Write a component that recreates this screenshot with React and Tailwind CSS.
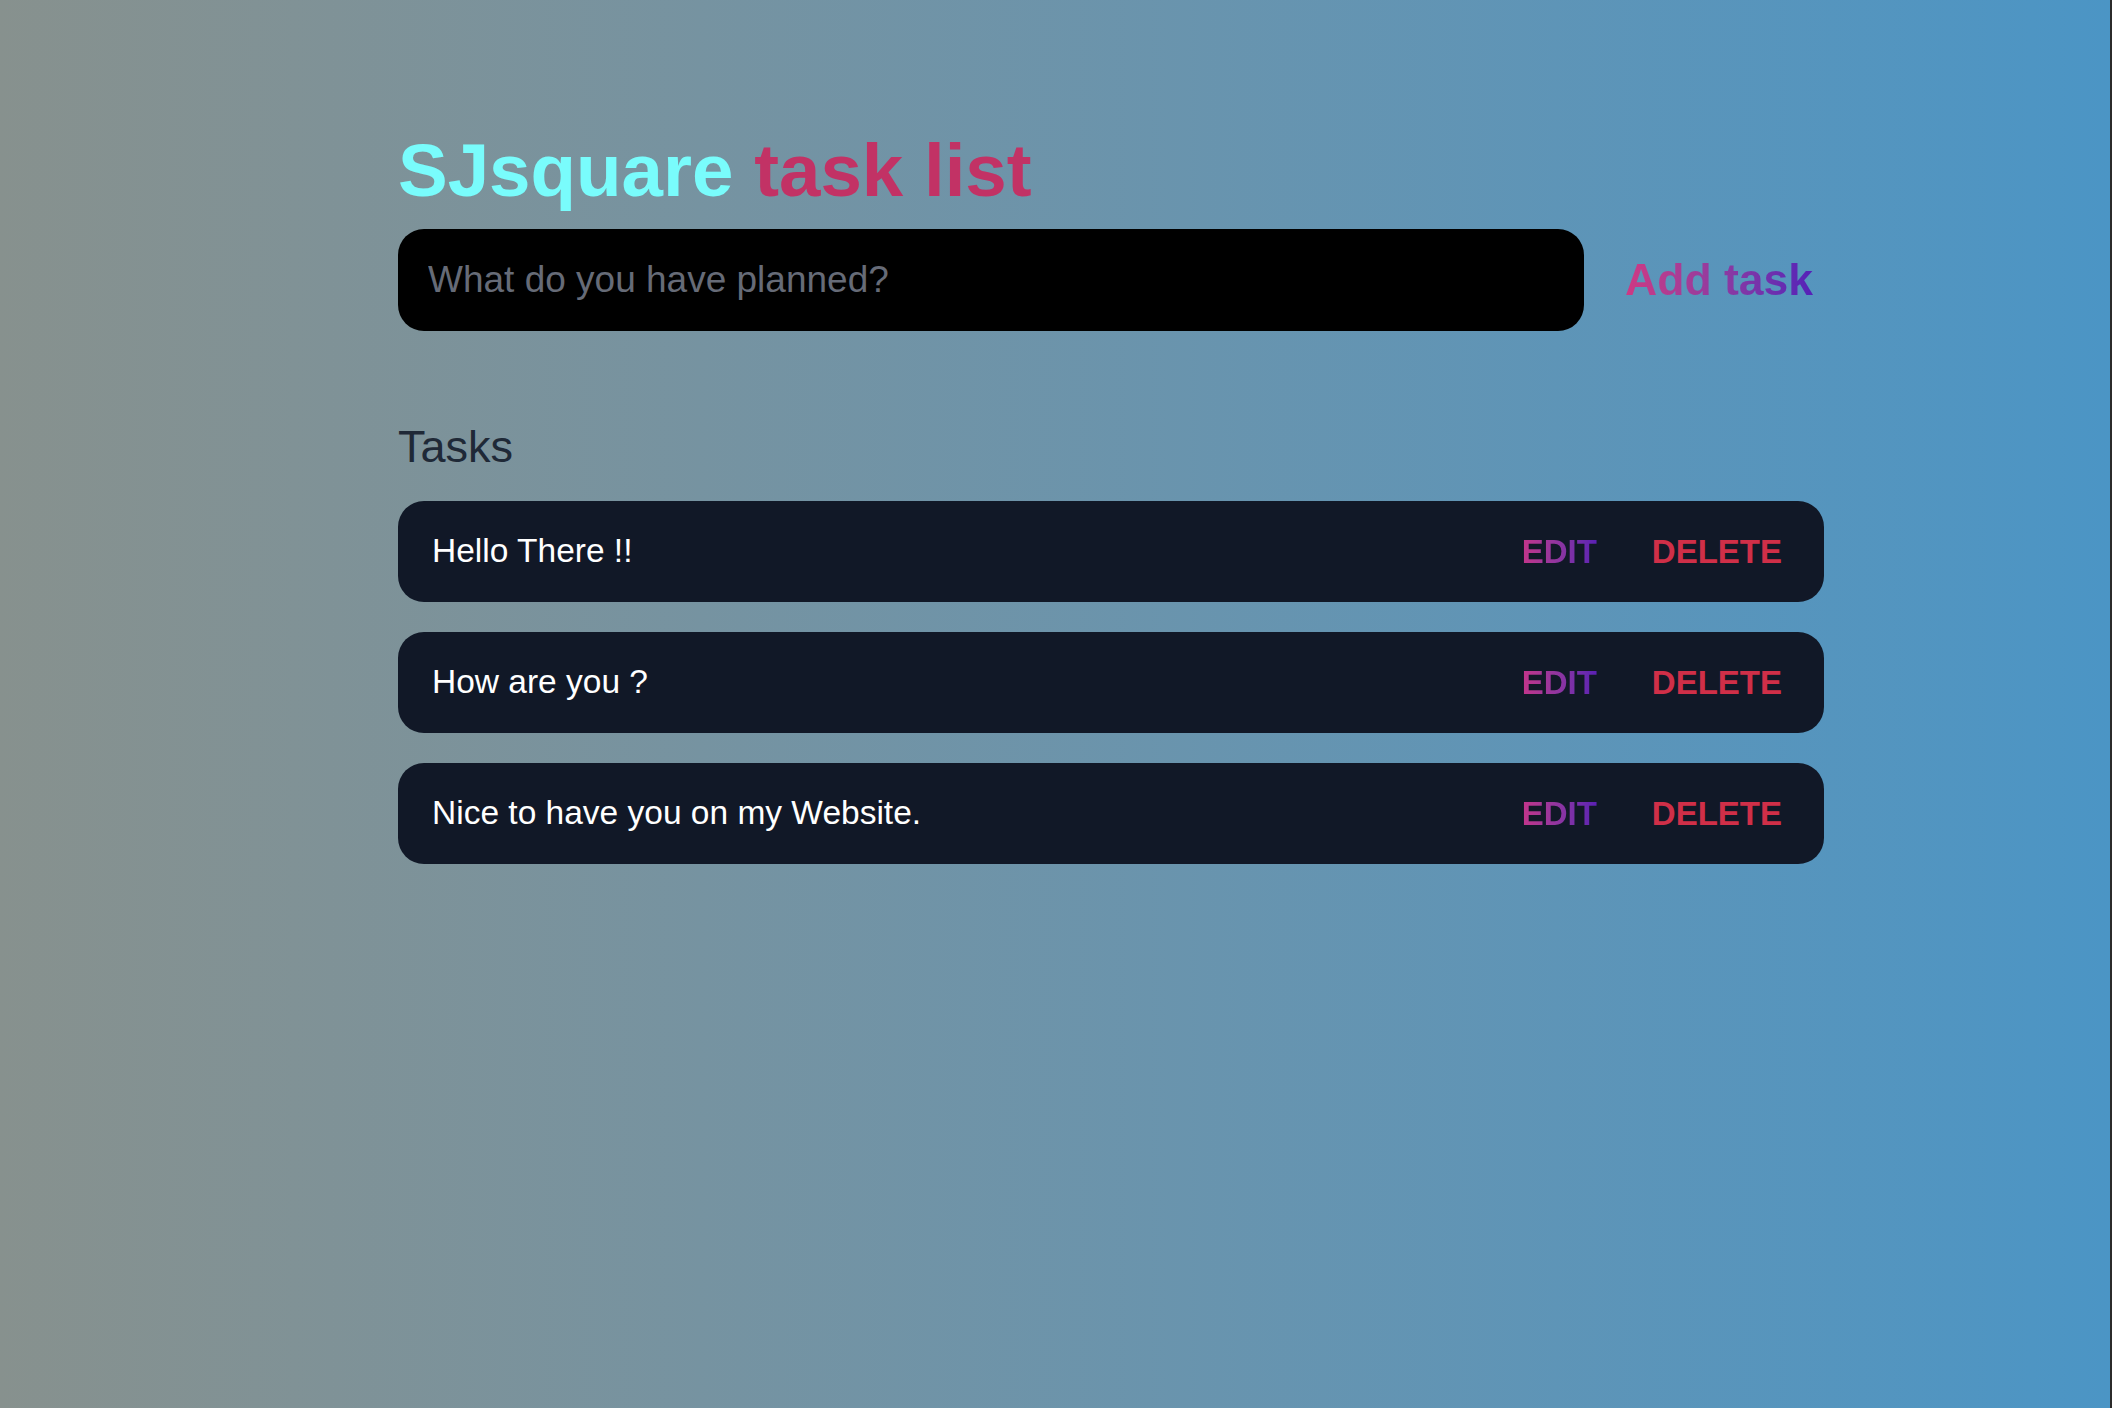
import { useState } from 'react'

const INITIAL_TASKS = [
  { id: 1, text: 'Hello There !!' },
  { id: 2, text: 'How are you ?' },
  { id: 3, text: 'Nice to have you on my Website.' },
]

export default function App() {
  const [tasks, setTasks] = useState(INITIAL_TASKS)
  const [draft, setDraft] = useState('')

  const addTask = (e) => {
    e.preventDefault()
    if (!draft.trim()) return
    setTasks([...tasks, { id: Date.now(), text: draft.trim() }])
    setDraft('')
  }

  const deleteTask = (id) => setTasks(tasks.filter((t) => t.id !== id))

  return (
    <div
      className="min-h-screen bg-gradient-to-r from-[#87918e] to-[#4b95c5] border-r-2 border-[#2b2b2b]"
      style={{ fontFamily: '"Liberation Sans", Arial, sans-serif' }}
    >
      <div className="ml-[398px] w-[1426px] pt-[134px]">
        <h1 className="h-[74px] text-[74.5px] leading-[74px] font-bold">
          <span className="text-[#79fcfc]">SJsquare</span>{' '}
          <span className="text-[#c23265]">task list</span>
        </h1>

        <form onSubmit={addTask} className="mt-[21px] flex items-center">
          <input
            type="text"
            placeholder="What do you have planned?"
            className="flex-1 h-[102px] rounded-[26px] bg-black px-[30px] text-[37px] text-white placeholder:text-[#666b77] outline-none"
            value={draft}
            onChange={(e) => setDraft(e.target.value)}
          />
          <button
            type="submit"
            className="ml-[41px] mr-[11px] text-[44.5px] font-bold leading-none bg-gradient-to-r from-[#cf3883] to-[#5520b8] bg-clip-text text-transparent"
          >
            Add task
          </button>
        </form>

        <h2 className="mt-[93px] text-[45px] leading-none text-[#1f2937]">Tasks</h2>

        <div className="mt-[32px] flex flex-col gap-[30px]">
          {tasks.map((t) => (
            <div
              key={t.id}
              className="h-[101px] rounded-[26px] bg-[#111827] flex items-center pl-[34px] pr-[42px]"
            >
              <span className="flex-1 text-[33.5px] text-white">{t.text}</span>
              <button className="text-[33px] font-bold bg-gradient-to-r from-[#c3348a] to-[#5b1fb4] bg-clip-text text-transparent">
                EDIT
              </button>
              <button
                onClick={() => deleteTask(t.id)}
                className="ml-[55px] text-[33px] font-bold text-[#d02f48]"
              >
                DELETE
              </button>
            </div>
          ))}
        </div>
      </div>
    </div>
  )
}
